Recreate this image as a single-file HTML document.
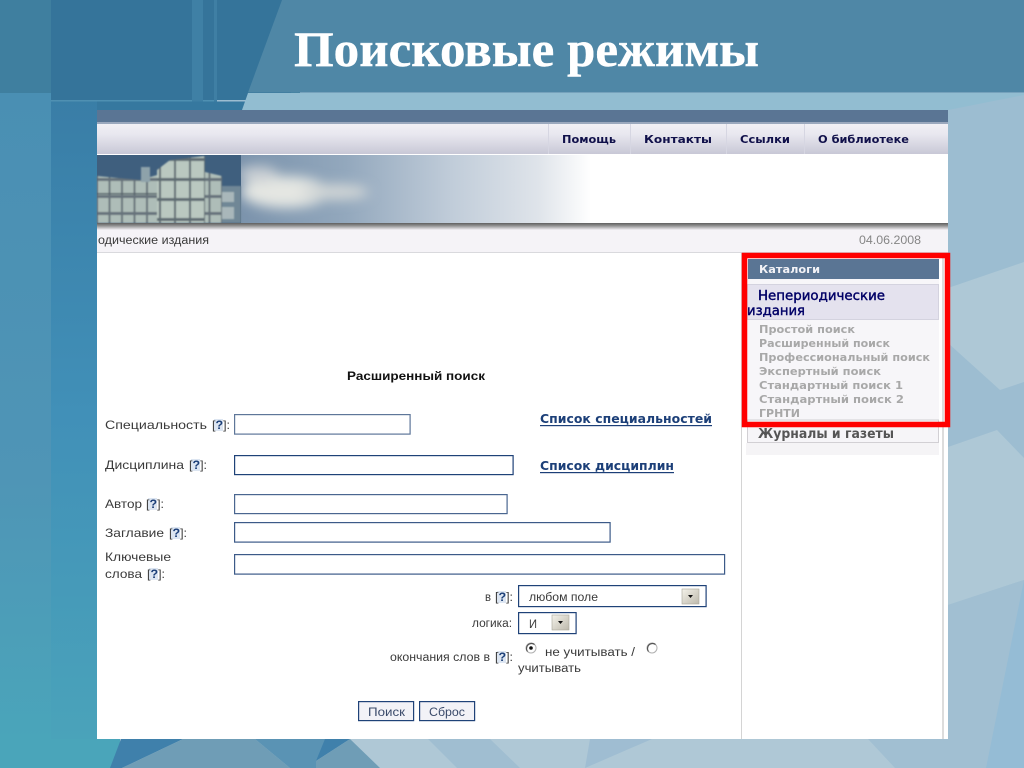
<!DOCTYPE html>
<html lang="ru"><head><meta charset="utf-8"><title>Поисковые режимы</title>
<style>
html,body{margin:0;padding:0;width:1024px;height:768px;overflow:hidden;background:#4f87a6}
svg{display:block}
.l{font:12px "Liberation Sans",sans-serif;fill:#3a3a3a}
.q{font-weight:bold;fill:#1c3f78}
.n{font:bold 11px "DejaVu Sans",sans-serif;fill:#10104a}
.g{font:bold 11px "DejaVu Sans",sans-serif;fill:#a8a8a8}
.a{font:bold 12px "DejaVu Sans",sans-serif;fill:#1c3f78}
.i{fill:#fff;stroke-width:1.2}
.h{fill:#dce5f1}
</style></head><body>
<svg width="1024" height="768" viewBox="0 0 1024 768" xmlns="http://www.w3.org/2000/svg">
<defs>
<linearGradient id="lft" x1="0" y1="0" x2="0" y2="1"><stop offset="0" stop-color="#4a8fb3"/><stop offset=".6" stop-color="#4f95b6"/><stop offset="1" stop-color="#4aa5ba"/></linearGradient>
<linearGradient id="lft2" x1="0" y1="0" x2="0" y2="1"><stop offset="0" stop-color="#397da6"/><stop offset=".5" stop-color="#4190b8"/><stop offset="1" stop-color="#4aa3ba"/></linearGradient>
<linearGradient id="nav" x1="0" y1="0" x2="0" y2="1"><stop offset="0" stop-color="#f1f0f5"/><stop offset=".35" stop-color="#e8e7ef"/><stop offset="1" stop-color="#c8c8d6"/></linearGradient>
<linearGradient id="sky" x1="0" y1="0" x2="1" y2="0"><stop offset="0" stop-color="#7b93ac"/><stop offset=".3" stop-color="#93a8bd"/><stop offset=".6" stop-color="#c0ccd9"/><stop offset=".85" stop-color="#dfe4ea"/><stop offset="1" stop-color="#fff"/></linearGradient>
<linearGradient id="shd" x1="0" y1="0" x2="0" y2="1"><stop offset="0" stop-color="#5f5f5f"/><stop offset=".35" stop-color="#8a8a8a"/><stop offset="1" stop-color="#f5f3f7"/></linearGradient>
<linearGradient id="btn" x1="0" y1="0" x2="1" y2="1"><stop offset="0" stop-color="#f4f2ea"/><stop offset="1" stop-color="#bdb9ac"/></linearGradient>
<filter id="b1" x="-30%" y="-60%" width="160%" height="220%"><feGaussianBlur stdDeviation="6"/></filter>
<filter id="b0"><feGaussianBlur stdDeviation="0.7"/></filter>
<pattern id="win" x="97" y="180" width="12.5" height="17" patternUnits="userSpaceOnUse"><rect width="12.5" height="17" fill="#66727a"/><rect x="1" y="1" width="10.5" height="14" fill="#aebdb8"/></pattern>
<pattern id="win2" x="160" y="160" width="15" height="20" patternUnits="userSpaceOnUse"><rect width="15" height="20" fill="#5f6c72"/><rect x="1" y="1" width="13" height="17" fill="#bac8c0"/></pattern>
</defs>

<!-- background -->
<rect width="1024" height="768" fill="#9dbdd1"/>
<rect x="0" y="93" width="51" height="646" fill="url(#lft)"/>
<rect x="51" y="93" width="46" height="646" fill="url(#lft2)"/>
<rect x="0" y="0" width="300" height="93" fill="#3f7f9f"/>
<rect x="51" y="0" width="240" height="100" fill="#35749a"/>
<rect x="51" y="100" width="165" height="1.5" fill="#4f90b2"/>
<rect x="192" y="0" width="11" height="110" fill="#3f80a5"/>
<rect x="214" y="0" width="3" height="110" fill="#3f7fa4"/>
<rect x="97" y="101.5" width="150" height="8.5" fill="#36789f"/>
<polygon points="248,93 1024,93 1024,110 242,110" fill="#92bdd1"/>
<polygon points="282,0 1024,0 1024,92.5 248,92.5" fill="#4f87a6"/>
<polygon points="948,110 1024,95 1024,262 948,288" fill="#9cbdd1"/>
<polygon points="948,288 1024,262 1024,382 1000,390 948,343" fill="#aec8d6"/>
<polygon points="948,447 997,430 1024,458 1024,580 948,605" fill="#aec8d6"/>
<polygon points="948,605 1024,580 1024,768 948,768" fill="#a1bfd2"/>
<polygon points="1024,580 1024,768 986,768" fill="#95bcd5"/>

<!-- bottom strip -->
<rect x="0" y="739" width="948" height="29" fill="#afc8d6"/>
<rect x="0" y="739" width="120" height="29" fill="#4aa5ba"/>
<polygon points="121,739 183,739 122,768 110,768" fill="#3f80ab"/>
<polygon points="183,739 255,739 290,768 122,768" fill="#6f9db6"/>
<polygon points="255,739 335,739 316,761 316,768 290,768" fill="#5a93b4"/>
<polygon points="325,739 350,739 316,761" fill="#3f80ab"/>
<polygon points="350,739 380,768 316,768 316,761" fill="#6f9db6"/>
<polygon points="428,739 490,739 520,768 457,768" fill="#a0bed1"/>
<polygon points="590,739 652,739 585,768" fill="#9fbdd2"/>
<polygon points="868,739 948,739 948,768 895,768" fill="#a1bfd2"/>

<!-- page -->
<rect x="97" y="110" width="851" height="629" fill="#fff"/>
<rect x="97" y="110" width="851" height="12" fill="#5a7594"/>
<rect x="97" y="122" width="851" height="2" fill="#9aa8bd"/>
<rect x="97" y="124" width="851" height="30" fill="url(#nav)"/>
<g fill="#d6d6e2"><rect x="548" y="124" width="1" height="30"/><rect x="630" y="124" width="1" height="30"/><rect x="726" y="124" width="1" height="30"/><rect x="804" y="124" width="1" height="30"/></g>
<text class="n" x="562" y="143" textLength="54" lengthAdjust="spacingAndGlyphs">Помощь</text>
<text class="n" x="644" y="143" textLength="68" lengthAdjust="spacingAndGlyphs">Контакты</text>
<text class="n" x="740" y="143" textLength="50" lengthAdjust="spacingAndGlyphs">Ссылки</text>
<text class="n" x="818" y="143" textLength="91" lengthAdjust="spacingAndGlyphs">О библиотеке</text>

<!-- banner -->
<rect x="241" y="155" width="350" height="68" fill="url(#sky)"/>
<g filter="url(#b1)"><ellipse cx="285" cy="192" rx="44" ry="16" fill="#e4e6e2"/><ellipse cx="335" cy="192" rx="34" ry="8" fill="#d0d5d6"/><ellipse cx="258" cy="174" rx="20" ry="8" fill="#c8ced3"/></g>
<rect x="97" y="155" width="144" height="68" fill="#3f5f7e"/>
<g filter="url(#b0)">
<polygon points="97,176 140,180 157,175 157,223 97,223" fill="url(#win)"/>
<polygon points="157,170 170,160 205,156 205,223 157,223" fill="url(#win2)"/>
<polygon points="205,172 222,176 222,223 205,223" fill="url(#win)"/>
<rect x="222" y="186" width="19" height="37" fill="#6f8796"/>
<rect x="222" y="192" width="12" height="10" fill="#a9b7ba"/>
<rect x="222" y="207" width="12" height="12" fill="#a9b7ba"/>
<rect x="141" y="167" width="9" height="15" fill="#8ea2aa"/>
<rect x="97" y="193" width="60" height="1.5" fill="#56636a"/>
</g>
<rect x="97" y="223" width="851" height="7" fill="url(#shd)"/>
<rect x="97" y="230" width="851" height="22" fill="#f5f3f7"/>
<rect x="97" y="252" width="851" height="1" fill="#d9d9dd"/>
<text class="l" x="98" y="244" textLength="111" lengthAdjust="spacingAndGlyphs" style="font-size:11.5px">одические издания</text>
<text class="l" x="859" y="244" textLength="62" lengthAdjust="spacingAndGlyphs" style="font-size:11.5px;fill:#858585">04.06.2008</text>

<!-- right column -->
<rect x="741" y="253" width="1" height="486" fill="#d4d4d4"/>
<rect x="942" y="253" width="2" height="486" fill="#dcdcdc"/>
<rect x="747" y="259" width="192" height="163" fill="#f7f6f9"/>
<rect x="748" y="259" width="191" height="20" fill="#5a7594"/>
<text x="759" y="273" textLength="61" lengthAdjust="spacingAndGlyphs" style="font:bold 11px 'DejaVu Sans',sans-serif;fill:#f2f2f6">Каталоги</text>
<rect x="747.5" y="284.5" width="191" height="35" fill="#e4e2ee" stroke="#d4d3df"/>
<text x="758" y="300" textLength="127" lengthAdjust="spacingAndGlyphs" style="font:13px 'DejaVu Sans',sans-serif;fill:#000066;stroke:#000066;stroke-width:.4">Непериодические</text>
<text x="747" y="315" textLength="58" lengthAdjust="spacingAndGlyphs" style="font:13px 'DejaVu Sans',sans-serif;fill:#000066;stroke:#000066;stroke-width:.4">издания</text>
<text class="g" x="759" y="333" textLength="96" lengthAdjust="spacingAndGlyphs">Простой поиск</text>
<text class="g" x="759" y="347" textLength="131" lengthAdjust="spacingAndGlyphs">Расширенный поиск</text>
<text class="g" x="759" y="361" textLength="171" lengthAdjust="spacingAndGlyphs">Профессиональный поиск</text>
<text class="g" x="759" y="375" textLength="122" lengthAdjust="spacingAndGlyphs">Экспертный поиск</text>
<text class="g" x="759" y="389" textLength="144" lengthAdjust="spacingAndGlyphs">Стандартный поиск 1</text>
<text class="g" x="759" y="403" textLength="145" lengthAdjust="spacingAndGlyphs">Стандартный поиск 2</text>
<text class="g" x="759" y="417" textLength="41" lengthAdjust="spacingAndGlyphs">ГРНТИ</text>
<rect x="747.5" y="420" width="191" height="22.5" fill="#f6f5f8" stroke="#d2d0d4"/>
<text x="758" y="438" textLength="136" lengthAdjust="spacingAndGlyphs" style="font:bold 13px 'DejaVu Sans',sans-serif;fill:#555">Журналы и газеты</text>
<rect x="746" y="443" width="193" height="12" fill="#f5f4f6"/>
<rect x="744.5" y="255.5" width="203" height="169" fill="none" stroke="#ff0000" stroke-width="5.5"/>

<!-- form -->
<text x="347" y="380" textLength="138" lengthAdjust="spacingAndGlyphs" style="font:bold 12px 'Liberation Sans',sans-serif;fill:#111">Расширенный поиск</text>

<rect class="h" x="214" y="419" width="9" height="12"/>
<rect class="h" x="191" y="459" width="9" height="12"/>
<rect class="h" x="148" y="498" width="9" height="12"/>
<rect class="h" x="171" y="527" width="9" height="12"/>
<rect class="h" x="149" y="568" width="9" height="12"/>
<rect class="h" x="497" y="591" width="9" height="12"/>
<rect class="h" x="497" y="651" width="9" height="12"/>

<text class="l" x="105" y="429" textLength="102" lengthAdjust="spacingAndGlyphs">Специальность</text>
<text class="l" x="212" y="429" textLength="18" lengthAdjust="spacingAndGlyphs">[<tspan class="q">?</tspan>]:</text>
<text class="l" x="105" y="469" textLength="79" lengthAdjust="spacingAndGlyphs">Дисциплина</text>
<text class="l" x="189" y="469" textLength="18" lengthAdjust="spacingAndGlyphs">[<tspan class="q">?</tspan>]:</text>
<text class="l" x="105" y="508" textLength="37" lengthAdjust="spacingAndGlyphs">Автор</text>
<text class="l" x="146" y="508" textLength="18" lengthAdjust="spacingAndGlyphs">[<tspan class="q">?</tspan>]:</text>
<text class="l" x="105" y="537" textLength="59" lengthAdjust="spacingAndGlyphs">Заглавие</text>
<text class="l" x="169" y="537" textLength="18" lengthAdjust="spacingAndGlyphs">[<tspan class="q">?</tspan>]:</text>
<text class="l" x="105" y="561" textLength="66" lengthAdjust="spacingAndGlyphs">Ключевые</text>
<text class="l" x="105" y="578" textLength="37" lengthAdjust="spacingAndGlyphs">слова</text>
<text class="l" x="147" y="578" textLength="18" lengthAdjust="spacingAndGlyphs">[<tspan class="q">?</tspan>]:</text>

<rect class="i" x="234.6" y="414.6" width="175.5" height="19.5" stroke="#5e7699"/>
<rect class="i" x="234.6" y="455.6" width="278.5" height="19" stroke="#1f4278"/>
<rect class="i" x="234.6" y="494.6" width="272.5" height="19" stroke="#4a6690"/>
<rect class="i" x="234.6" y="522.6" width="375.5" height="19.5" stroke="#3c5a88"/>
<rect class="i" x="234.6" y="554.6" width="490" height="19.5" stroke="#3c5a88"/>

<text class="a" x="540" y="423" textLength="172" lengthAdjust="spacingAndGlyphs">Список специальностей</text>
<rect x="540" y="425" width="172" height="1.2" fill="#1c3f78"/>
<text class="a" x="540" y="470" textLength="134" lengthAdjust="spacingAndGlyphs">Список дисциплин</text>
<rect x="540" y="472" width="134" height="1.2" fill="#1c3f78"/>

<text class="l" x="485" y="601" textLength="6" lengthAdjust="spacingAndGlyphs" style="font-size:11.5px">в</text>
<text class="l" x="495" y="601" textLength="18" lengthAdjust="spacingAndGlyphs" style="font-size:11.5px">[<tspan class="q">?</tspan>]:</text>
<rect class="i" x="518.6" y="585.6" width="187.5" height="21" stroke="#1f4278"/>
<text class="l" x="529" y="601" textLength="69" lengthAdjust="spacingAndGlyphs" style="font-size:11.5px">любом поле</text>
<rect x="682" y="589" width="17" height="15" fill="url(#btn)" stroke="#a8a59a" stroke-width=".6"/>
<polygon points="688,595 693,595 690.5,598" fill="#111"/>

<text class="l" x="472" y="627" textLength="40" lengthAdjust="spacingAndGlyphs" style="font-size:11.5px">логика:</text>
<rect class="i" x="518.6" y="612.6" width="57.5" height="21" stroke="#1f4278"/>
<text class="l" x="529" y="628" textLength="8" lengthAdjust="spacingAndGlyphs" style="font-size:11.5px">И</text>
<rect x="552" y="615" width="17" height="15" fill="url(#btn)" stroke="#a8a59a" stroke-width=".6"/>
<polygon points="558,621 563,621 560.5,624" fill="#111"/>

<text class="l" x="390" y="661" textLength="100" lengthAdjust="spacingAndGlyphs" style="font-size:11.5px">окончания слов в</text>
<text class="l" x="495" y="661" textLength="18" lengthAdjust="spacingAndGlyphs" style="font-size:11.5px">[<tspan class="q">?</tspan>]:</text>
<circle cx="531" cy="648" r="5" fill="#fff" stroke="#b0b0b0"/>
<path d="M527.5,651.5 A5,5 0 0 1 534.5,644.5" fill="none" stroke="#555" stroke-width="1.2"/>
<circle cx="531" cy="648" r="1.8" fill="#111"/>
<text class="l" x="545" y="656" textLength="90" lengthAdjust="spacingAndGlyphs" style="font-size:11.5px">не учитывать /</text>
<circle cx="652" cy="648" r="5" fill="#fff" stroke="#b0b0b0"/>
<path d="M648.5,651.5 A5,5 0 0 1 655.5,644.5" fill="none" stroke="#555" stroke-width="1.2"/>
<text class="l" x="518" y="672" textLength="63" lengthAdjust="spacingAndGlyphs" style="font-size:11.5px">учитывать</text>

<rect x="358.6" y="701.6" width="55" height="19" fill="#f2f2f7" stroke="#1f4278" stroke-width="1.2"/>
<text class="l" x="368" y="716" textLength="37" lengthAdjust="spacingAndGlyphs" style="fill:#3a4a6a">Поиск</text>
<rect x="419.6" y="701.6" width="55" height="19" fill="#f2f2f7" stroke="#1f4278" stroke-width="1.2"/>
<text class="l" x="429" y="716" textLength="36" lengthAdjust="spacingAndGlyphs" style="fill:#3a4a6a">Сброс</text>

<!-- title -->
<text x="294" y="66" textLength="465" lengthAdjust="spacingAndGlyphs" style="font:bold 50px 'Liberation Serif',serif;fill:#fff;stroke:#fff;stroke-width:.4">Поисковые режимы</text>
</svg>
</body></html>
